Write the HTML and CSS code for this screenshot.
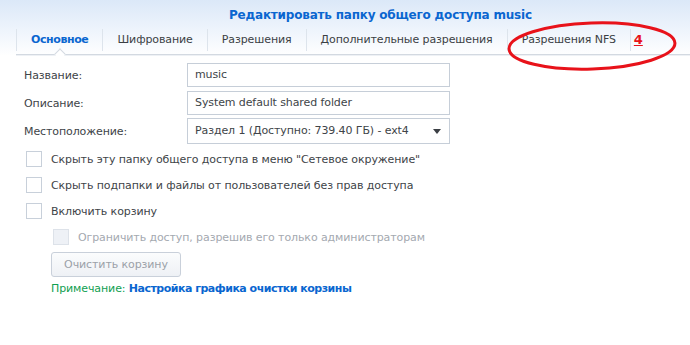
FILE: index.html
```html
<!DOCTYPE html>
<html lang="ru">
<head>
<meta charset="utf-8">
<link rel="stylesheet" href="styles.css">
</head>
<body>
<div class="page">
  <div class="header">
    <div class="title">Редактировать папку общего доступа music</div>
    <div class="tabs">
      <div class="tab active">Основное</div>
      <div class="tab">Шифрование</div>
      <div class="tab">Разрешения</div>
      <div class="tab">Дополнительные разрешения</div>
      <div class="tab">Разрешения NFS</div>
      <div class="tab num">4</div>
    </div>
  </div>
  <div class="form">
    <div class="row">
      <div class="label">Название:</div>
      <div class="field">music</div>
    </div>
    <div class="row">
      <div class="label">Описание:</div>
      <div class="field">System default shared folder</div>
    </div>
    <div class="row">
      <div class="label">Местоположение:</div>
      <div class="field select">Раздел 1 (Доступно: 739.40 ГБ) - ext4<span class="arrow"></span></div>
    </div>
    <div class="check"><span class="box"></span>Скрыть эту папку общего доступа в меню "Сетевое окружение"</div>
    <div class="check"><span class="box"></span>Скрыть подпапки и файлы от пользователей без прав доступа</div>
    <div class="check"><span class="box"></span>Включить корзину</div>
    <div class="sub">
      <div class="check disabled"><span class="box"></span>Ограничить доступ, разрешив его только администраторам</div>
      <div class="btn">Очистить корзину</div>
      <div class="note"><span class="note-label">Примечание:</span> <span class="link">Настройка графика очистки корзины</span></div>
    </div>
  </div>
  <svg class="ellipse" width="180" height="56" viewBox="0 0 180 56"><ellipse cx="88" cy="28" rx="83" ry="23" fill="none" stroke="#e8121a" stroke-width="3" transform="rotate(-2 88 28)"/></svg>
</div>
</body>
</html>
```
FILE: styles.css
```css
html, body { margin: 0; padding: 0; background: #fff; }
.page {
  position: relative;
  width: 690px;
  height: 345px;
  overflow: hidden;
  font-family: "DejaVu Sans", Verdana, sans-serif;
  font-size: 11px;
  letter-spacing: -0.1px;
  color: #404448;
}
.header {
  background: linear-gradient(#dbe8f8 0px, #eef4fc 30px, #ffffff 56px);
  padding-top: 8px;
}
.title {
  font-weight: bold;
  color: #0a66d0;
  font-size: 12px;
  letter-spacing: -0.2px;
  height: 20px;
  line-height: 14px;
  padding-left: 229px;
}
.tabs {
  display: flex;
  margin-left: 16px;
  height: 26px;
  border-bottom: 1px solid #d3d9e1;
  box-shadow: 0 1px 0 #eef1f5;
}
.tab {
  padding: 0 14px;
  border-left: 1px solid #dde4ec;
  height: 22px;
  margin-top: 1px;
  line-height: 22px;
  color: #3b3f44;
}
.tab.active {
  color: #0a66d0;
  font-weight: bold;
  letter-spacing: -0.4px;
  position: relative;
}
.tab.active::after {
  content: "";
  position: absolute;
  left: 39px;
  bottom: -7px;
  width: 7px;
  height: 7px;
  background: #fff;
  border-left: 1px solid #d3d9e1;
  border-top: 1px solid #d3d9e1;
  transform: rotate(45deg);
}
.tab.num {
  color: #e8121a;
  font-weight: bold;
  text-decoration: underline;
  font-size: 13px;
  padding: 0 3px;
}
.form { padding: 8px 0 0 24px; }
.row { display: flex; align-items: center; height: 24px; margin-bottom: 4px; }
.label { width: 163px; }
.field {
  box-sizing: border-box;
  width: 263px;
  height: 24px;
  border: 1px solid #c6ced8;
  padding: 0 7px;
  line-height: 22px;
  color: #404448;
}
.field.select { height: 26px; line-height: 24px; position: relative; }
.arrow {
  position: absolute;
  right: 8px;
  top: 10px;
  width: 0; height: 0;
  border-left: 4px solid transparent;
  border-right: 4px solid transparent;
  border-top: 5px solid #3b3f44;
}
.check { display: flex; align-items: center; height: 16px; margin-top: 8px; padding-left: 2px; }
.check + .check { margin-top: 10px; }
.box {
  box-sizing: border-box;
  width: 16px; height: 16px;
  border: 1px solid #c8d0da;
  background: #fff;
  margin-right: 9px;
}
.sub { padding-left: 27px; }
.sub .check { margin-top: 10px; padding-left: 2px; }
.check.disabled { color: #a4a9b0; }
.check.disabled .box { background: #eef1f6; border-color: #dde2e9; }
.btn {
  box-sizing: border-box;
  width: 130px;
  height: 25px;
  margin-top: 7px;
  border: 1px solid #c9d0da;
  border-radius: 3px;
  background: linear-gradient(#fbfcfd, #eef1f5);
  color: #9ba1a8;
  text-align: center;
  line-height: 23px;
}
.note { margin-top: 5px; }
.note-label { color: #10a050; }
.link { color: #0a66d0; font-weight: bold; letter-spacing: -0.5px; }
.ellipse { position: absolute; left: 504px; top: 18px; }
```
